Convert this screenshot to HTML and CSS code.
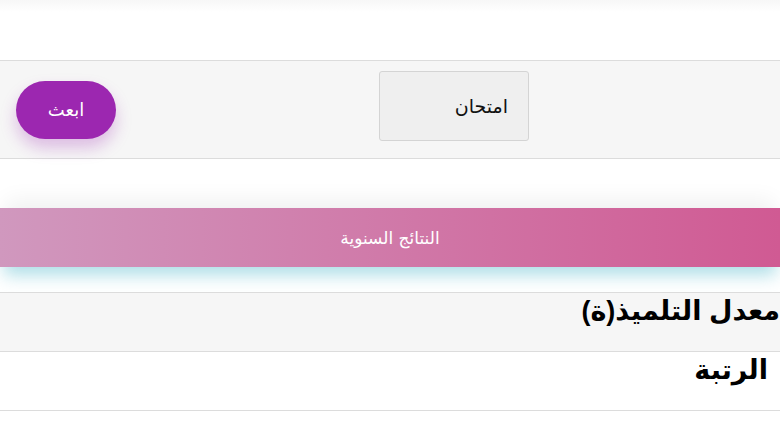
FILE: index.html
```html
<!DOCTYPE html>
<html lang="ar" dir="rtl">

<head>
  <meta charset="UTF-8">
  <meta name="viewport" content="width=device-width, initial-scale=1.0">
  <title>النتائج</title>
  <link rel="stylesheet" href="styles.css">
</head>

<body>
  <div class="top-bar"></div>

  <div class="form-bar">
    <button class="send-btn">ابعث</button>
    <div class="select-box">امتحان</div>
  </div>

  <div class="banner">النتائج السنوية</div>

  <table class="results">
    <tr class="row-gray">
      <th>معدل التلميذ(ة)</th>
    </tr>
    <tr>
      <th class="rank">الرتبة</th>
    </tr>
  </table>
</body>

</html>
```

FILE: styles.css
```css
* {
  box-sizing: border-box;
}

body {
  margin: 0;
  background-color: #fff;
  font-family: "Liberation Sans", "DejaVu Sans", sans-serif;
  overflow: hidden;
}

.top-bar {
  height: 61px;
  background: linear-gradient(#f7f7f7, #fff 12px);
  border-bottom: 1px solid #dcdcdc;
}

.form-bar {
  direction: ltr;
  height: 98px;
  background-color: #f6f6f6;
  border-bottom: 1px solid #dcdcdc;
  display: flex;
  align-items: center;
  padding-left: 16px;
  gap: 263px;
}

.send-btn {
  width: 100px;
  height: 58px;
  border: none;
  border-radius: 29px;
  background-color: #9c27b0;
  color: #fff;
  font-family: "DejaVu Sans", sans-serif;
  font-size: 18px;
  box-shadow: 0 9px 16px rgba(156, 39, 176, 0.28);
}

.select-box {
  align-self: flex-start;
  margin-top: 10px;
  width: 150px;
  height: 70px;
  background-color: #efefef;
  border: 1px solid #d4d4d4;
  border-radius: 3px;
  direction: rtl;
  padding-right: 20px;
  display: flex;
  align-items: center;
  font-family: "DejaVu Sans", sans-serif;
  font-size: 19px;
  color: #111;
}

.banner {
  margin-top: 49px;
  height: 59px;
  background: linear-gradient(to right, #d098be, #d05a93);
  color: #fff;
  display: flex;
  align-items: center;
  justify-content: center;
  font-family: "DejaVu Sans", sans-serif;
  font-size: 17px;
  box-shadow: 0 -14px 22px -6px rgba(0, 0, 0, 0.06), 0 12px 16px -4px rgba(130, 205, 218, 0.65);
}

.results {
  margin-top: 25px;
  width: 100%;
  border-collapse: collapse;
}

.results th {
  height: 59px;
  border-top: 1px solid #dcdcdc;
  border-bottom: 1px solid #dcdcdc;
  text-align: right;
  vertical-align: top;
  padding: 2px 0 0 0;
  font-size: 27px;
  font-weight: bold;
  color: #000;
}

.results th.rank {
  padding-right: 12px;
}

.row-gray {
  background-color: #f6f6f6;
}
```
